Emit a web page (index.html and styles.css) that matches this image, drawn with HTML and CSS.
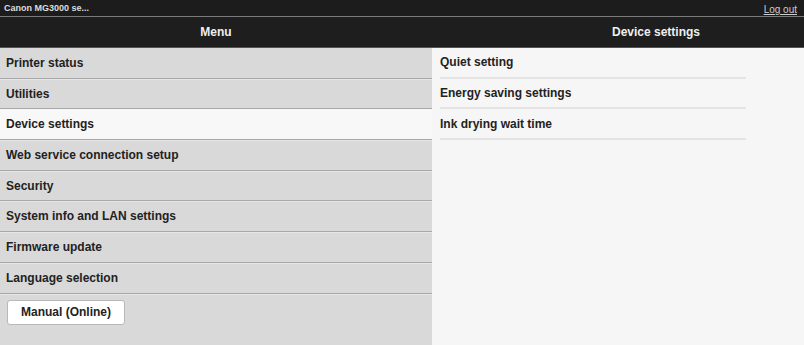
FILE: index.html
```html
<!DOCTYPE html>
<html lang="en">
<head>
  <meta charset="UTF-8">
  <title>Canon MG3000 series</title>
  <link rel="stylesheet" href="styles.css">
</head>
<body>

  <div class="topbar">
    <span class="device-name">Canon MG3000 se...</span>
    <a href="#" class="logout">Log out</a>
  </div>

  <div class="layout">
    <!-- Left menu -->
    <div class="menu">
      <div class="col-header">Menu</div>
      <ul class="menu-list">
        <li>Printer status</li>
        <li>Utilities</li>
        <li class="active">Device settings</li>
        <li>Web service connection setup</li>
        <li>Security</li>
        <li>System info and LAN settings</li>
        <li>Firmware update</li>
        <li>Language selection</li>
      </ul>
      <div class="manual">
        <button class="manual-btn">Manual (Online)</button>
      </div>
    </div>

    <!-- Right panel -->
    <div class="panel">
      <div class="col-header panel-header">Device settings</div>
      <ul class="panel-list">
        <li>Quiet setting</li>
        <li>Energy saving settings</li>
        <li>Ink drying wait time</li>
      </ul>
    </div>
  </div>

</body>
</html>
```

FILE: styles.css
```css
* {
  margin: 0;
  padding: 0;
  box-sizing: border-box;
}

body {
  font-family: 'Liberation Sans', Arial, sans-serif;
  background: #f6f6f6;
  color: #222;
  min-height: 100vh;
  display: flex;
  flex-direction: column;
  overflow: hidden;
}

.topbar {
  height: 17px;
  background: #1c1c1c;
  border-bottom: 1px solid #7a7a7a;
  display: flex;
  justify-content: space-between;
  align-items: center;
  padding: 0 7px 0 4px;
}

.device-name {
  color: #ddd;
  font-size: 9px;
  font-weight: bold;
}

.logout {
  color: #ccc;
  font-size: 10px;
  text-decoration: underline;
  margin-top: 3px;
}

.layout {
  flex: 1;
  display: grid;
  grid-template-columns: 432px 1fr;
}

.col-header {
  height: 31px;
  background: #1e1e1e;
  color: #eee;
  font-size: 12px;
  font-weight: bold;
  display: flex;
  align-items: center;
  justify-content: center;
  border-bottom: 1px solid #555;
}

.panel-header {
  padding-left: 76px;
}

.menu {
  background: #d9d9d9;
}

.menu-list,
.panel-list {
  list-style: none;
}

.menu-list li {
  height: 30.7px;
  padding-left: 6px;
  font-size: 12px;
  font-weight: bold;
  display: flex;
  align-items: center;
  border-bottom: 1px solid #a8a8a8;
  box-shadow: 0 1px 0 #e6e6e6;
}

.menu-list li.active {
  background: #f8f8f8;
}

.manual {
  padding: 6px 7px;
}

.manual-btn {
  width: 118px;
  height: 25px;
  background: #fff;
  border: 1px solid #b8b8b8;
  border-radius: 3px;
  font-family: inherit;
  font-size: 12px;
  font-weight: bold;
  color: #222;
}

.panel {
  background: #f6f6f6;
}

.panel-list {
  padding-left: 8px;
  width: 314px;
}

.panel-list li {
  height: 30.7px;
  font-size: 12px;
  font-weight: bold;
  display: flex;
  align-items: center;
  border-bottom: 2px solid #e4e4e4;
}
```
